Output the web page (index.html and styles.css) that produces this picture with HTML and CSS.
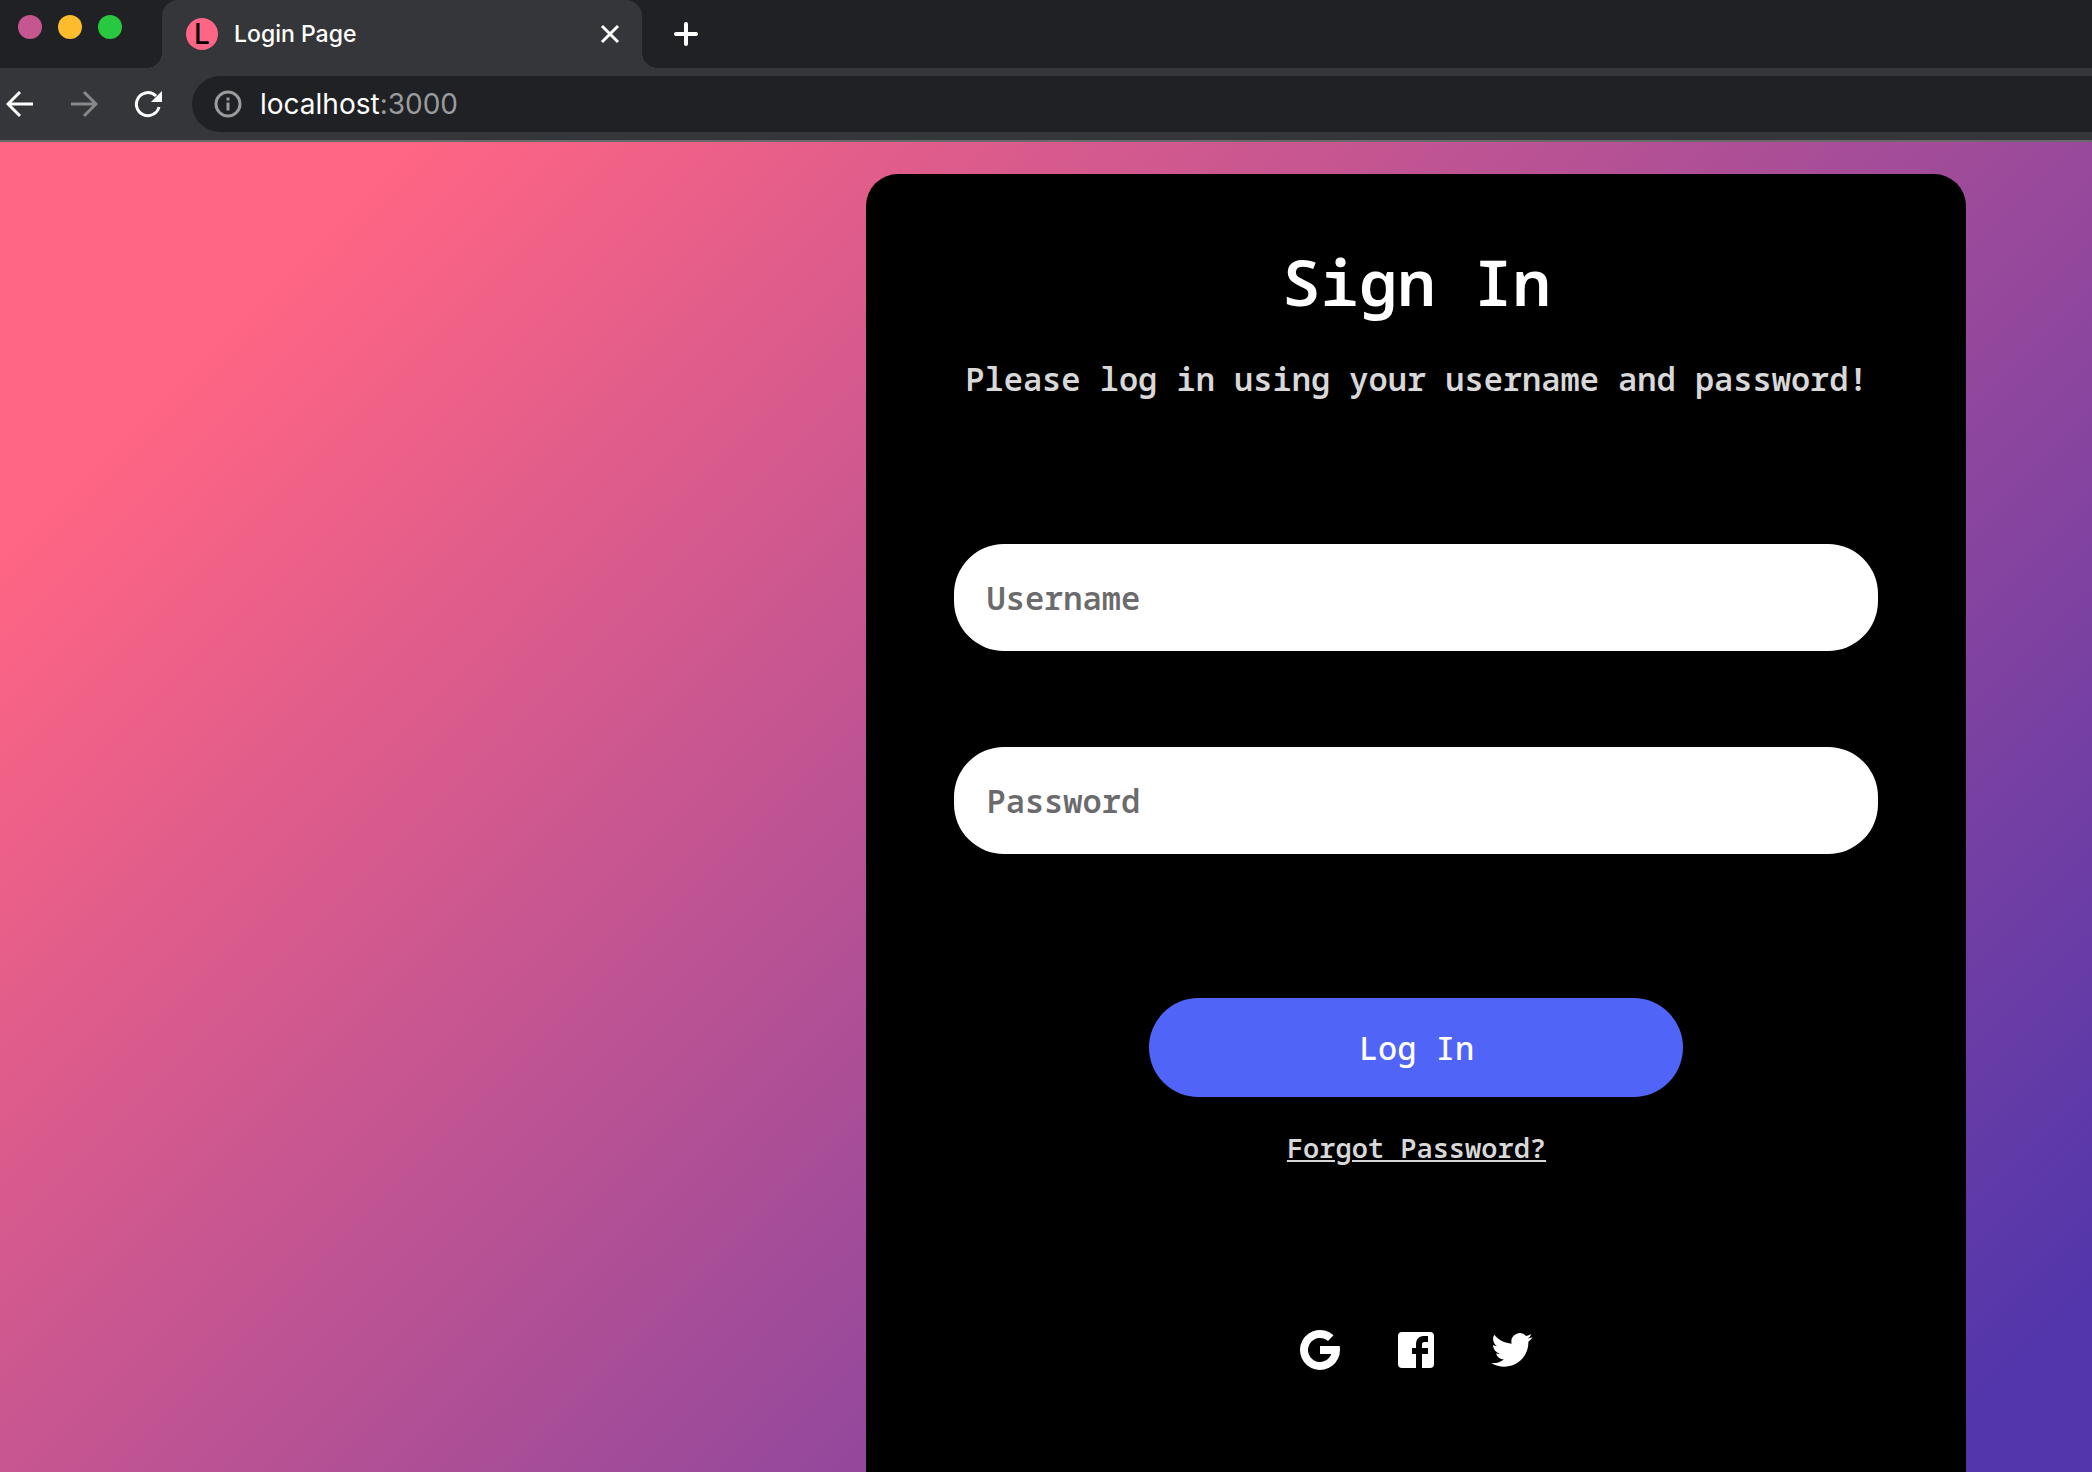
FILE: index.html
```html
<!DOCTYPE html>
<html lang="en">
<head>
  <meta charset="UTF-8">
  <meta name="viewport" content="width=device-width, initial-scale=1.0">
  <title>Login Page</title>
  <link rel="stylesheet" href="styles.css">
</head>
<body>
  <header class="browser">
    <div class="tab-bar">
      <div class="lights">
        <span class="light light-close"></span>
        <span class="light light-min"></span>
        <span class="light light-max"></span>
      </div>
      <div class="tab">
        <span class="favicon">L</span>
        <span class="tab-title">Login Page</span>
        <button type="button" class="icon-btn" aria-label="Close tab">
          <svg width="20" height="20" viewBox="0 0 20 20" fill="none" stroke="#fff" stroke-width="3"><path d="M2 2l16 16M18 2L2 18"/></svg>
        </button>
      </div>
      <button type="button" class="icon-btn new-tab" aria-label="New tab">
        <svg width="24" height="24" viewBox="0 0 24 24" fill="none" stroke="#fff" stroke-width="4" stroke-linecap="round"><path d="M12 2v20M2 12h20"/></svg>
      </button>
    </div>
    <div class="toolbar">
      <div class="nav">
        <button type="button" class="icon-btn" aria-label="Back">
          <svg width="28" height="28" viewBox="0 0 28 28" fill="none" stroke="#fff" stroke-width="3"><path d="M27 14H3M14 2L2 14l12 12"/></svg>
        </button>
        <button type="button" class="icon-btn" aria-label="Forward">
          <svg width="28" height="28" viewBox="0 0 28 28" fill="none" stroke="#87888a" stroke-width="3"><path d="M1 14h24M14 2l12 12-12 12"/></svg>
        </button>
        <button type="button" class="icon-btn" aria-label="Reload">
          <svg width="28" height="28" viewBox="0 0 28 28"><path d="M25 17A11.500 11.500 0 1 1 22 6" fill="none" stroke="#fff" stroke-width="3"/><path d="M28 1v11H17z" fill="#fff"/></svg>
        </button>
      </div>
      <div class="address">
        <svg width="28" height="28" viewBox="0 0 28 28"><circle cx="14" cy="14" r="12" fill="none" stroke="#9a9b9d" stroke-width="3"/><path d="M12.500 12.500h3v8h-3zM12.500 7.500h3v3h-3z" fill="#9a9b9d"/></svg>
        <span class="url">localhost<span class="port">:3000</span></span>
      </div>
    </div>
  </header>

  <main class="page">
    <div class="cover">
      <h1>Sign In</h1>
      <p class="subtitle">Please log in using your username and password!</p>
      <form>
        <input type="text" placeholder="Username" aria-label="Username">
        <input type="password" placeholder="Password" aria-label="Password">
        <button type="submit" class="login-btn">Log In</button>
      </form>
      <a href="#" class="forgot">Forgot Password?</a>
      <div class="socials">
        <a href="#" aria-label="Google">
          <svg width="48" height="48" viewBox="0 0 48 48" fill="#fff"><path d="M37.500 9.200A20 20 0 1 0 44 24c0-1.300-.1-2.700-.3-4H24v8h11.300A12 12 0 1 1 32 15z"/></svg>
        </a>
        <a href="#" aria-label="Facebook">
          <svg width="48" height="48" viewBox="-6 -6 48 48"><rect width="36" height="36" rx="4" fill="#fff"/><path d="M18 36V22h-4v-6h4v-3.500C18 7.500 21 4 25.500 4H30v6h-3.500C24.500 10 24 11 24 12.500V16h6v6h-6v14z" fill="#000"/></svg>
        </a>
        <a href="#" aria-label="Twitter">
          <svg width="48" height="48" viewBox="-2 -2 28 28" fill="#fff"><path d="M23.953 4.570a10 10 0 0 1-2.825.775 4.958 4.958 0 0 0 2.163-2.723c-.951.555-2.005.959-3.127 1.184a4.920 4.920 0 0 0-8.384 4.482C7.690 8.095 4.067 6.130 1.640 3.162a4.822 4.822 0 0 0-.666 2.475c0 1.710.87 3.213 2.188 4.096a4.904 4.904 0 0 1-2.228-.616v.060a4.923 4.923 0 0 0 3.946 4.827 4.996 4.996 0 0 1-2.212.085 4.936 4.936 0 0 0 4.604 3.417 9.867 9.867 0 0 1-6.102 2.105c-.39 0-.779-.023-1.170-.067a13.995 13.995 0 0 0 7.557 2.209c9.053 0 13.998-7.496 13.998-13.985 0-.21 0-.42-.015-.63A9.935 9.935 0 0 0 24 4.590z"/></svg>
        </a>
      </div>
    </div>
  </main>
</body>
</html>
```

FILE: styles.css
```css
* {
  box-sizing: border-box;
}

body {
  margin: 0;
  min-height: 100vh;
  display: flex;
  flex-direction: column;
}

/* browser bar */
.browser {
  background-color: #35363a;
  border-bottom: 2px solid #69696b;
  font-family: Inter, sans-serif;
  color: #fff;
}

.icon-btn {
  display: flex;
  padding: 0;
  border: none;
  background: none;
  cursor: pointer;
}

.tab-bar {
  display: flex;
  height: 68px;
  background-color: #202124;
}

.lights {
  display: flex;
  gap: 16px;
  width: 162px;
  padding: 15px 18px;
}

.light {
  width: 24px;
  height: 24px;
  border-radius: 50%;
}

.light-close {
  background-color: #c65690;
}

.light-min {
  background-color: #fdbc2e;
}

.light-max {
  background-color: #28c840;
}

.tab {
  position: relative;
  display: flex;
  align-items: center;
  gap: 16px;
  width: 480px;
  padding: 0 22px 0 24px;
  border-radius: 16px 16px 0 0;
  background-color: #35363a;
}

/* curved feet on both sides of the tab */
.tab::before,
.tab::after {
  content: "";
  position: absolute;
  bottom: 0;
  width: 16px;
  height: 16px;
}

.tab::before {
  right: 100%;
  background: radial-gradient(circle at 0 0, #202124 16px, #35363a 16px);
}

.tab::after {
  left: 100%;
  background: radial-gradient(circle at 100% 0, #202124 16px, #35363a 16px);
}

.favicon {
  width: 32px;
  height: 32px;
  border-radius: 50%;
  background-color: #ff6584;
  color: #000;
  font-size: 28px;
  font-weight: 500;
  line-height: 32px;
  text-align: center;
}

.tab-title {
  flex: 1;
  font-size: 23px;
  font-weight: 500;
}

.new-tab {
  align-items: center;
  margin-left: 32px;
}

.toolbar {
  display: flex;
  align-items: center;
  padding: 8px 0;
}

.nav {
  display: flex;
  gap: 36px;
  width: 192px;
  padding-left: 6px;
}

.address {
  flex: 1;
  display: flex;
  align-items: center;
  gap: 18px;
  height: 56px;
  padding-left: 22px;
  border-radius: 28px 0 0 28px;
  background-color: #202124;
}

.url {
  font-size: 28px;
}

.port {
  color: #9a9b9d;
}

/* login page */
.page {
  flex: 1;
  display: flex;
  justify-content: flex-end;
  padding: 32px 6% 0;
  background: linear-gradient(135deg, #ff6584 12%, #5236ab 95%);
  font-family: "Noto Sans Mono", "DejaVu Sans Mono", monospace;
  font-weight: 600;
}

.cover {
  display: flex;
  flex-direction: column;
  align-items: center;
  width: 1100px;
  padding: 64px 88px;
  border-radius: 32px 32px 0 0;
  background-color: #000;
  color: #d8d8d8;
}

h1 {
  margin: 0;
  font-size: 64px;
  font-weight: 600;
  line-height: 88px;
  color: #fff;
}

.subtitle {
  margin: 31px 0 0;
  font-size: 32px;
  line-height: 44px;
  white-space: nowrap;
}

form {
  display: flex;
  flex-direction: column;
  align-items: center;
  gap: 96px;
  width: 100%;
  margin-top: 143px;
}

input {
  width: 100%;
  height: 107px;
  padding: 0 32px;
  border: none;
  border-radius: 50px;
  background-color: #fff;
  font-family: inherit;
  font-size: 32px;
  font-weight: inherit;
}

input::placeholder {
  color: #6b6b6d;
}

.login-btn {
  width: 534px;
  height: 99px;
  margin-top: 48px;
  border: none;
  border-radius: 50px;
  background-color: #5065f8;
  color: #fff;
  font-family: inherit;
  font-size: 32px;
  font-weight: 500;
  cursor: pointer;
}

.forgot {
  margin-top: 31px;
  color: inherit;
  font-size: 27px;
  line-height: 40px;
}

.socials {
  display: flex;
  gap: 48px;
  margin-top: 158px;
}

.socials a,
.socials svg {
  display: block;
}
```
